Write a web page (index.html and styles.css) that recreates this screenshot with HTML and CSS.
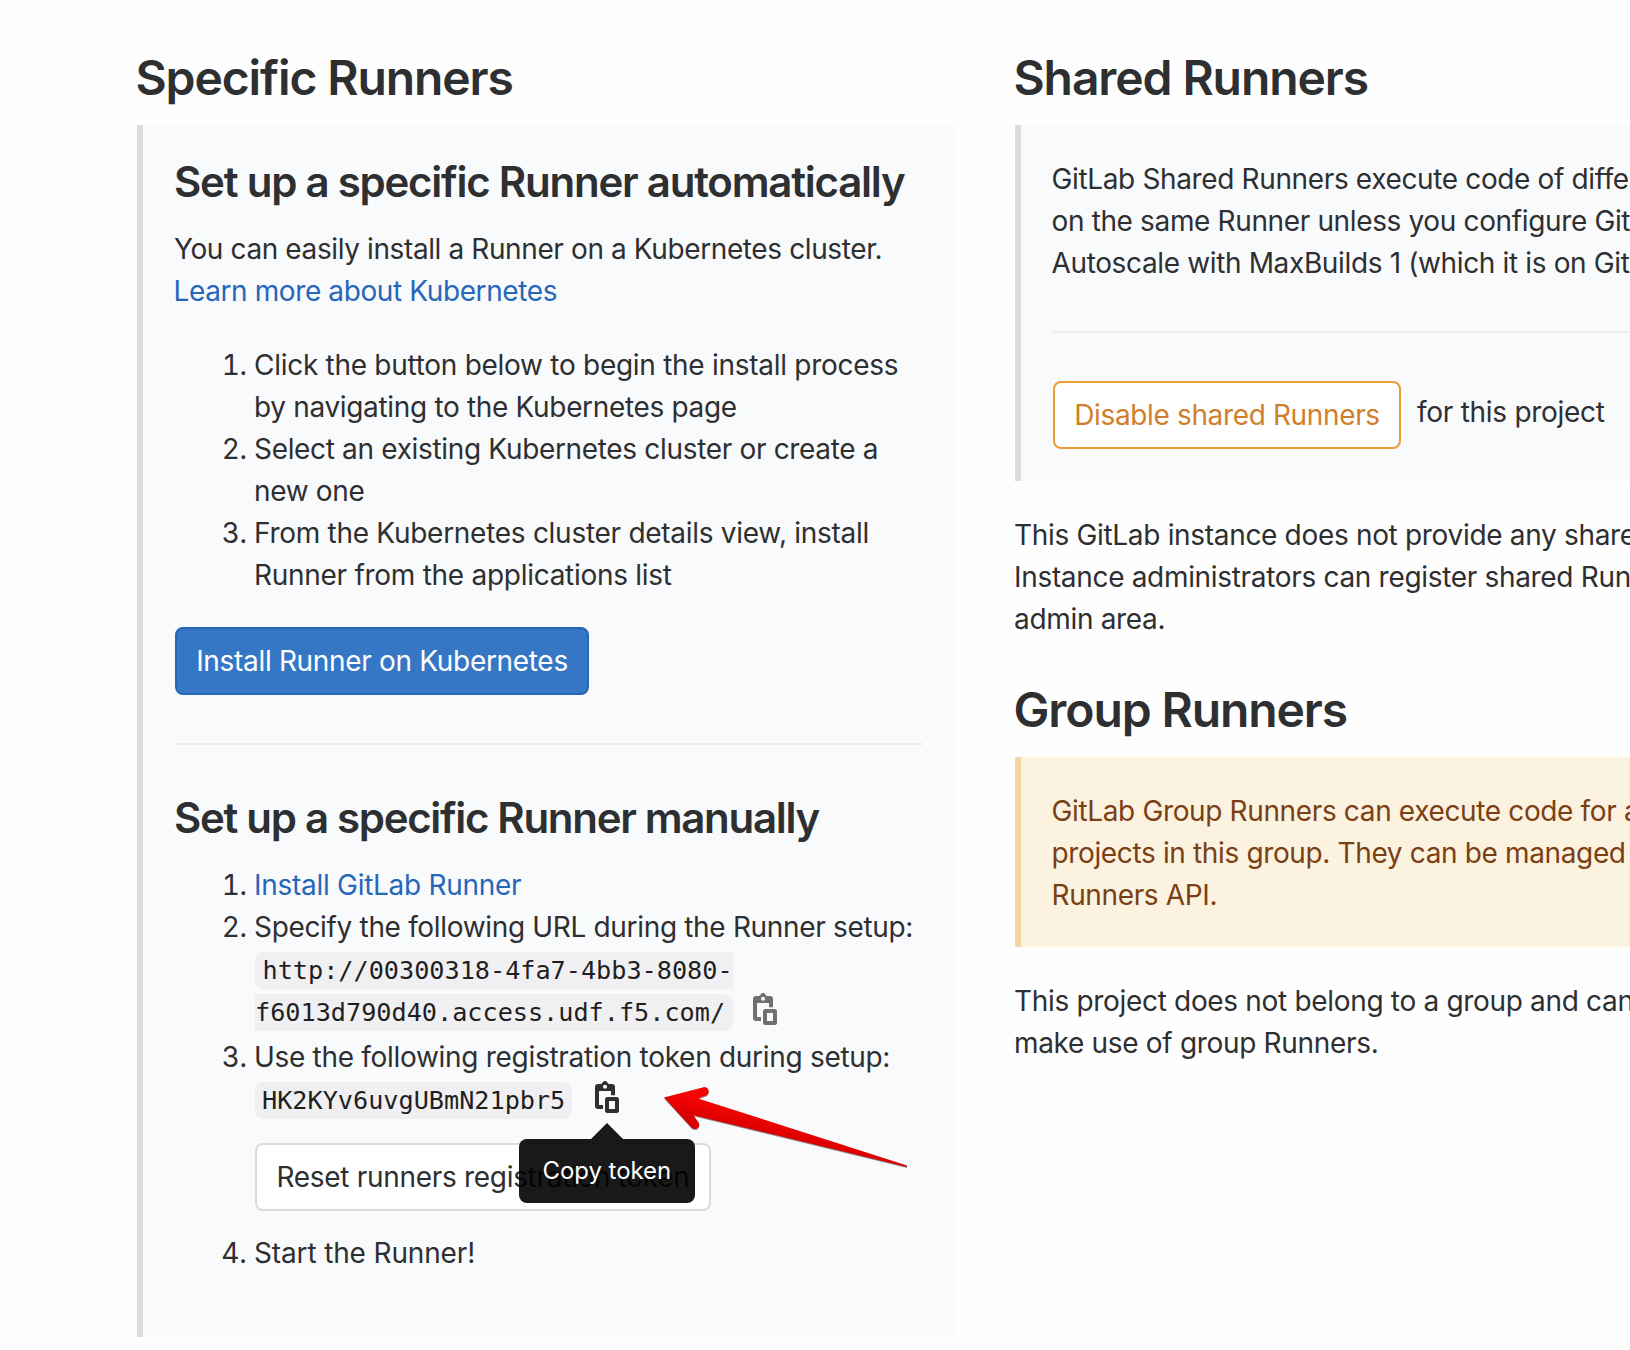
FILE: index.html
```
<!DOCTYPE html>
<html lang="en">
<head>
<meta charset="utf-8">
<title>Runners</title>
<link rel="stylesheet" href="styles.css">
</head>
<body>
<main class="runners">
  <section class="column">
    <h2 class="title title-specific">Specific Runners</h2>
    <div class="callout callout-specific">
      <h3 class="subtitle">Set up a specific Runner automatically</h3>
      <p class="text intro">You can easily install a Runner on a Kubernetes cluster.<br><a class="link" href="#">Learn more about Kubernetes</a></p>
      <ol class="steps">
        <li>Click the button below to begin the install process<br><span class="step-wide">by navigating to the Kubernetes page</span></li>
        <li class="step-wide">Select an existing Kubernetes cluster or create a<br>new one</li>
        <li>From the Kubernetes cluster details view, install<br>Runner from the applications list</li>
      </ol>
      <a class="btn btn-primary" href="#">Install Runner on Kubernetes</a>
      <hr class="rule">
      <h3 class="subtitle subtitle-manual">Set up a specific Runner manually</h3>
      <ol class="steps">
        <li><a class="link" href="#">Install GitLab Runner</a></li>
        <li class="step-url"><span class="step-wide">Specify the following URL during the Runner setup:</span><br><code class="code">http://00300318-4fa7-4bb3-8080-</code><br><code class="code code-end">f6013d790d40.access.udf.f5.com/</code><span class="copy copy-url"><svg class="copy-icon" viewBox="0 0 24 32"><use href="#clipboard"/></svg></span></li>
        <li class="step-token">Use the following registration token during setup:<br><code class="code code-token">HK2KYv6uvgUBmN21pbr5</code><span class="copy copy-token"><svg class="copy-icon" viewBox="0 0 24 32"><use href="#clipboard"/></svg><span class="tooltip">Copy token</span><svg class="pointer" viewBox="0 0 250 80"><use href="#red-arrow"/></svg></span>
          <a class="btn btn-reset" href="#">Reset runners registration token</a></li>
        <li class="step-start">Start the Runner!</li>
      </ol>
    </div>
  </section>

  <section class="column column-right">
    <h2 class="title">Shared Runners</h2>
    <div class="callout callout-shared">
      <p class="text tight">GitLab Shared Runners execute code of different projects<br>on the same Runner unless you configure GitLab Runner<br>Autoscale with MaxBuilds 1 (which it is on GitLab.com).</p>
      <hr class="rule">
      <div class="toggle">
        <a class="btn btn-warning" href="#">Disable shared Runners</a>
        <span class="toggle-note">for this project</span>
      </div>
    </div>
    <p class="text note">This GitLab instance does not provide any shared Runners yet.<br>Instance administrators can register shared Runners in the<br>admin area.</p>
    <h2 class="title title-group">Group Runners</h2>
    <div class="callout callout-group">
      <p class="text tight">GitLab Group Runners can execute code for all the<br>projects in this group. They can be managed using the<br>Runners API.</p>
    </div>
    <p class="text note">This project does not belong to a group and can therefore not<br>make use of group Runners.</p>
  </section>
</main>

<svg class="symbols" aria-hidden="true">
  <defs>
    <linearGradient id="red" gradientUnits="userSpaceOnUse" x1="76" y1="27" x2="72" y2="44">
      <stop offset="0" stop-color="#f60404"/>
      <stop offset="1" stop-color="#dc0000"/>
    </linearGradient>
    <symbol id="clipboard" viewBox="0 0 24 32">
      <path fill="currentColor" fill-rule="evenodd" d="M6 3C7.500 2.700 7.500 0 10 0s2.500 2.700 4 3h3a3 3 0 0 1 3 3v8.300h-4V10H4v14h4v4H3a3 3 0 0 1-3-3V6a3 3 0 0 1 3-3zM10 3.700a2 2 0 1 0 0 4 2 2 0 0 0 0-4zM12.500 16h9a2.500 2.500 0 0 1 2.500 2.500v11a2.500 2.500 0 0 1-2.500 2.500h-9a2.500 2.500 0 0 1-2.500-2.500v-11a2.500 2.500 0 0 1 2.500-2.500zM14 20v8h6v-8z"/>
    </symbol>
    <symbol id="red-arrow" viewBox="0 0 250 80">
      <path fill="url(#red)" d="M4 17.500L43.500 7.200C48 6.200 51 12.500 46.500 15.200L38 18.500 247 85.500 247 87 33.500 35.200 38.500 42.500C41.500 47.500 35 51.500 31 47z"/>
    </symbol>
  </defs>
</svg>
</body>
</html>
```
FILE: styles.css
```
* {
  box-sizing: border-box;
}

body {
  margin: 0;
  background: #fefefe;
  color: #2e2f31;
  font: 28px/42px Inter, sans-serif;
  letter-spacing: -0.28px;
}

h2, h3, p, ol, hr {
  margin: 0;
}

a {
  text-decoration: none;
}

.runners {
  display: grid;
  grid-template-columns: 818px minmax(0, 1fr);
  column-gap: 60px;
  height: 1350px;
  padding: 48px 0 0 137px;
  overflow: hidden;
  white-space: nowrap;
}

.column-right {
  overflow: hidden;
}

.title {
  margin-bottom: 18px;
  font-size: 48px;
  font-weight: 600;
  line-height: 59px;
  letter-spacing: -1.1px;
  text-indent: -1.5px;
}

.title-group {
  margin-top: 40px;
}

.subtitle {
  margin-bottom: 21px;
  font-size: 42px;
  font-weight: 600;
  line-height: 51px;
  letter-spacing: -1.23px;
  text-indent: -1px;
}

.subtitle-manual {
  letter-spacing: -1.31px;
}

.callout {
  border-left: 6px solid #dbdcde;
  background: #f9fafc;
}

.callout-specific {
  height: 1212px;
  padding: 31px 32px 0;
}

.callout-shared {
  padding: 33px 0 32px 32px;
}

.callout-group {
  padding: 33px 0 31px 32px;
  border-color: #f6d4a2;
  background: #fcf2e0;
  color: #7b3f14;
}

.text {
  margin-left: -1px;
}

.intro {
  margin-left: -1px;
  letter-spacing: -0.39px;
}

.intro .link {
  margin-left: -0.5px;
}

.callout .tight {
  margin-left: -1.5px;
  letter-spacing: -0.36px;
}

.note {
  margin-top: 33px;
  margin-left: -1px;
  letter-spacing: -0.32px;
}

.link {
  color: #2767b9;
}

.steps {
  padding-left: 79px;
}

.intro + .steps {
  margin: 32px 0 31px;
}

.btn {
  display: inline-block;
  height: 68px;
  padding: 11px 18px;
  border: 2px solid #dbdbdb;
  border-radius: 8px;
  background: #fff;
  color: #2e2f31;
  text-align: center;
  vertical-align: top;
}

.btn-primary {
  width: 414px;
  border-color: #2767b9;
  background: #3577c5;
  color: #fff;
  letter-spacing: -0.32px;
}

.btn-warning {
  width: 348px;
  border-color: #ec9b36;
  color: #cf7f2b;
  letter-spacing: -0.36px;
}

.btn-reset {
  display: block;
  width: 456px;
  margin: 23px 0 0 1px;
}

.rule {
  height: 2px;
  margin: 48px 0 47px;
  border: 0;
  background: #ecedef;
}

.callout-shared .rule {
  margin: 47px 0 48px;
}

.step-wide {
  letter-spacing: -0.33px;
}

.step-url {
  padding-bottom: 4px;
}

.step-token {
  letter-spacing: -0.3px;
}

.step-start {
  margin-top: 21px;
  letter-spacing: -0.14px;
}

.code {
  margin-left: 1px;
  padding: 4px 0 4px 7.5px;
  border-radius: 8px 0 0 8px;
  background: #f0f0f2;
  color: #1f1f1f;
  font: 25.2px/1 "DejaVu Sans Mono", monospace;
  letter-spacing: 0;
}

.code-end {
  padding: 4px 8px 4px 0;
  border-radius: 0 8px 8px 0;
}

.code-token {
  padding: 4px 7px;
  border-radius: 8px;
}

.copy {
  display: inline-block;
  position: relative;
  width: 24px;
  height: 32px;
  margin-left: 20px;
  color: #707070;
  line-height: 0;
  vertical-align: -4px;
}

.copy-token {
  margin-left: 22.5px;
  color: #2e2f31;
}

.copy-icon {
  width: 24px;
  height: 32px;
}

.tooltip {
  position: absolute;
  z-index: 1;
  top: 58px;
  left: -76px;
  width: 176px;
  height: 64px;
  border-radius: 8px;
  background: rgba(0, 0, 0, 0.9);
  color: #fff;
  font-size: 24px;
  line-height: 63px;
  letter-spacing: -0.06px;
  text-align: center;
}

.tooltip::before {
  content: "";
  position: absolute;
  top: -16px;
  left: 72px;
  border: solid transparent;
  border-width: 0 16px 16px;
  border-bottom-color: rgba(0, 0, 0, 0.9);
}

.pointer {
  position: absolute;
  top: -1px;
  left: 65px;
  width: 250px;
  height: 80px;
  overflow: visible;
  filter: drop-shadow(0 1px 0.6px rgba(0, 0, 0, 0.45));
}

.toggle {
  display: flex;
  align-items: flex-start;
  gap: 16px;
}

.toggle-note {
  padding-top: 10px;
  letter-spacing: -0.28px;
}

.symbols {
  position: absolute;
  width: 0;
  height: 0;
}

.symbols symbol {
  overflow: visible;
}
```
